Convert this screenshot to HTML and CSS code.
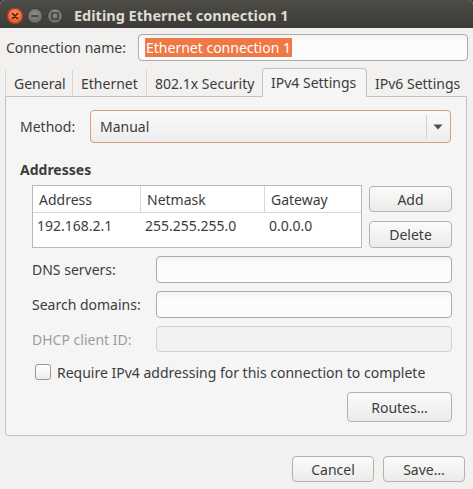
FILE: index.html
```html
<!DOCTYPE html>
<html>
<head>
<meta charset="utf-8">
<link rel="stylesheet" href="styles.css">
</head>
<body>
<div class="window">
  <div class="titlebar">
    <div class="wbtns">
      <span class="wb close"><svg width="16" height="16" viewBox="0 0 16 16"><path d="M5.5 5.5 L10.5 10.5 M10.5 5.5 L5.5 10.5" stroke="#4a1a08" stroke-width="1.6" stroke-linecap="round"/></svg></span>
      <span class="wb"><svg width="16" height="16" viewBox="0 0 16 16"><path d="M4.5 8 H11.5" stroke="#3a3935" stroke-width="1.6"/></svg></span>
      <span class="wb"><svg width="16" height="16" viewBox="0 0 16 16"><rect x="5" y="5" width="6" height="6" fill="none" stroke="#3a3935" stroke-width="1.4"/></svg></span>
    </div>
    <div class="title">Editing Ethernet connection 1</div>
  </div>
  <div class="content">
    <div class="name-row">
      <span class="name-label">Connection name:</span>
      <div class="entry name-entry"><span class="sel">Ethernet connection 1</span></div>
    </div>
    <div class="tabs">
      <div class="tab t1">General</div>
      <div class="tab t2">Ethernet</div>
      <div class="tab t3">802.1x Security</div>
      <div class="tab active">IPv4 Settings</div>
      <div class="tab t5">IPv6 Settings</div>
    </div>
    <div class="panel">
      <div class="method-row">
        <span class="method-label">Method:</span>
        <div class="combo">
          <span class="combo-text">Manual</span>
          <span class="combo-sep"></span>
          <span class="combo-arrow"><svg width="10" height="6" viewBox="0 0 10 6"><path d="M0.5 0.5 H9.5 L5 5.5 Z" fill="#4c4c4c"/></svg></span>
        </div>
      </div>
      <div class="heading">Addresses</div>
      <div class="addr-block">
        <div class="table">
          <div class="trow thead">
            <div class="c1">Address</div>
            <div class="c2">Netmask</div>
            <div class="c3">Gateway</div>
          </div>
          <div class="trow tbody">
            <div class="c1">192.168.2.1</div>
            <div class="c2">255.255.255.0</div>
            <div class="c3">0.0.0.0</div>
          </div>
        </div>
        <div class="side-btns">
          <div class="btn add">Add</div>
          <div class="btn del">Delete</div>
        </div>
      </div>
      <div class="form-row">
        <span class="form-label">DNS servers:</span>
        <div class="entry form-entry"></div>
      </div>
      <div class="form-row">
        <span class="form-label">Search domains:</span>
        <div class="entry form-entry"></div>
      </div>
      <div class="form-row disabled">
        <span class="form-label">DHCP client ID:</span>
        <div class="entry form-entry"></div>
      </div>
      <div class="check-row">
        <span class="checkbox"></span>
        <span class="check-text">Require IPv4 addressing for this connection to complete</span>
      </div>
      <div class="routes-row">
        <div class="btn routes">Routes…</div>
      </div>
    </div>
    <div class="actions">
      <div class="btn action">Cancel</div>
      <div class="btn action">Save…</div>
    </div>
  </div>
</div>
</body>
</html>
```
FILE: styles.css
```css
* { box-sizing: border-box; }
html, body { margin: 0; padding: 0; }
body {
  width: 473px;
  height: 489px;
  background: #4b2b42;
  font-family: "Noto Sans", "DejaVu Sans", sans-serif;
  font-size: 14px;
  color: #3c3c3c;
  overflow: hidden;
}
.window {
  width: 473px;
  height: 489px;
  background: #f2f1f0;
  border-radius: 5px 5px 0 0;
  overflow: hidden;
}
.titlebar {
  height: 28px;
  background: linear-gradient(#4d4c47, #3c3b37);
  display: flex;
  align-items: center;
  padding-left: 7px;
}
.wbtns { display: flex; gap: 4px; margin-top: 3px; }
.wb {
  width: 16px; height: 16px;
  border-radius: 50%;
  background: radial-gradient(circle at 50% 35%, #8e8c86, #5d5c57);
  box-shadow: inset 0 0 0 1px #34332f;
  display: flex;
}
.wb.close {
  background: radial-gradient(circle at 50% 35%, #f7915f, #e2461a);
  box-shadow: inset 0 0 0 1px #a9360f;
}
.title {
  margin-left: 11px;
  margin-top: 2px;
  color: #dfdbd2;
  font-weight: bold;
  font-size: 14.5px;
}
.name-row {
  display: flex;
  align-items: center;
  margin-top: 6px;
  height: 27px;
  padding-left: 6px;
}
.name-label { width: 132px; }
.entry {
  border: 1px solid #aeaaa5;
  border-radius: 4px;
  background: linear-gradient(#f3f3f3, #fcfcfc 30%);
  height: 27px;
}
.name-entry {
  width: 330px;
  display: flex;
  align-items: center;
  padding-left: 6px;
}
.sel {
  background: #f07746;
  color: #ffffff;
  line-height: 19px;
  padding: 0 1px;
}
.tabs {
  display: flex;
  align-items: flex-end;
  height: 28px;
  margin-top: 7px;
  padding-left: 5px;
  position: relative;
  z-index: 1;
}
.tab {
  height: 26px;
  display: flex;
  align-items: center;
  padding-left: 8px;
  border-left: 1px solid #d9d6d2;
  color: #3c3c3c;
  white-space: nowrap;
}
.t1 { width: 67px; }
.t2 { width: 74px; }
.t3 { width: 116px; }
.t5 { width: 100px; padding-left: 8px; border-left: none; }
.tab.active {
  width: 105px;
  height: 29px;
  margin-bottom: -1px;
  background: #f5f5f5;
  border: 1px solid #c6c2bd;
  border-bottom: none;
  border-radius: 4px 4px 0 0;
  padding-bottom: 2px;
}
.panel {
  margin-left: 5px;
  width: 462px;
  height: 340px;
  background: #f5f5f5;
  border: 1px solid #c6c2bd;
  border-radius: 0 0 3px 3px;
  padding: 13px 14px 0 14px;
}
.method-row {
  display: flex;
  align-items: center;
  height: 33px;
}
.method-label { width: 70px; }
.combo {
  width: 361px;
  height: 33px;
  border: 1px solid #dc9a7c;
  border-radius: 4px;
  background: linear-gradient(#fafafa, #ededed);
  display: flex;
  align-items: center;
  padding-left: 9px;
}
.combo-text { flex: 1; }
.combo-sep {
  width: 1px;
  height: 23px;
  background: #d4d1cd;
}
.combo-arrow {
  width: 22px;
  display: flex;
  justify-content: center;
  margin-right: 1px;
}
.heading {
  font-weight: bold;
  margin-top: 18px;
  line-height: 18px;
}
.addr-block {
  display: flex;
  margin-top: 6px;
  margin-left: 12px;
  gap: 7px;
}
.table {
  width: 330px;
  height: 63px;
  border: 1px solid #bdb9b4;
  background: #ffffff;
}
.trow { display: flex; }
.thead { height: 27px; border-bottom: 1px solid #dad7d3; }
.thead > div {
  display: flex;
  align-items: center;
  padding-left: 6px;
  border-right: 1px solid #dad7d3;
}
.thead > .c3 { border-right: none; }
.tbody > div { padding: 4px 0 0 4px; line-height: 18px; }
.c1 { width: 108px; }
.c2 { width: 124px; }
.c3 { flex: 1; }
.side-btns {
  display: flex;
  flex-direction: column;
  gap: 9px;
  padding-top: 1px;
}
.btn {
  border: 1px solid #b5b1ac;
  border-radius: 4px;
  background: linear-gradient(#fbfbfb, #ebebea);
  display: flex;
  align-items: center;
  justify-content: center;
  color: #3c3c3c;
}
.add { width: 83px; height: 26px; }
.del { width: 83px; height: 27px; }
.form-row {
  display: flex;
  align-items: center;
  margin-left: 12px;
  margin-top: 8px;
}
.form-label { width: 124px; }
.form-entry { width: 296px; }
.disabled .form-label { color: #a09d99; }
.disabled .form-entry {
  border-color: #d3d0cc;
  background: #f2f2f2;
  height: 26px;
}
.check-row {
  display: flex;
  align-items: center;
  margin-left: 15px;
  margin-top: 12px;
  height: 16px;
}
.checkbox {
  width: 16px;
  height: 16px;
  border: 1px solid #9c9893;
  border-radius: 3px;
  background: linear-gradient(#ffffff, #ececec);
  flex: none;
}
.check-text { margin-left: 6px; white-space: nowrap; }
.routes-row {
  display: flex;
  justify-content: flex-end;
  margin-top: 12px;
}
.routes { width: 105px; height: 30px; }
.actions {
  display: flex;
  justify-content: flex-end;
  gap: 9px;
  margin-top: 20px;
  padding-right: 8px;
}
.action { width: 82px; height: 26px; }
```
